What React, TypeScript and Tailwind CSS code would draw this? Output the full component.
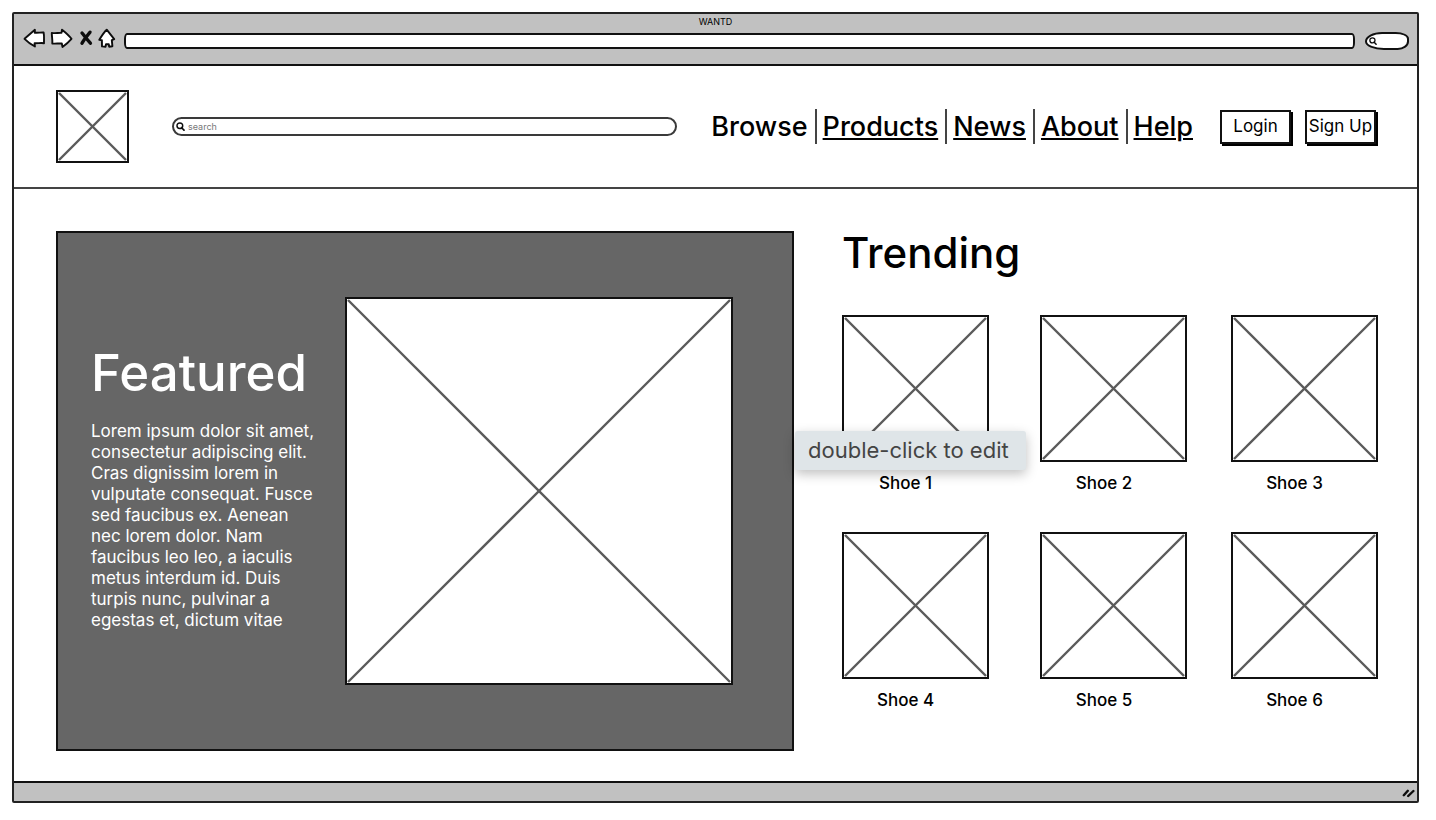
import React from "react";

const ink = "#0d0d0d";

function PlaceholderImage({ className, label }: { className: string; label: string }) {
  return (
    <svg
      role="img"
      aria-label={label}
      viewBox="0 0 100 100"
      preserveAspectRatio="none"
      className={`block shrink-0 overflow-visible border-2 border-[#111] bg-white p-px ${className}`}
    >
      <g stroke="#5a5a5a" strokeWidth="2.4">
        <line x1="0" y1="0" x2="100" y2="100" vectorEffect="non-scaling-stroke" />
        <line x1="100" y1="0" x2="0" y2="100" vectorEffect="non-scaling-stroke" />
      </g>
    </svg>
  );
}

function Magnifier({ className }: { className: string }) {
  return (
    <svg aria-hidden="true" viewBox="0 0 9 9" className={className} fill="none" stroke={ink} strokeLinecap="round">
      <path d="M1 3.8C0.9 2.1 2.1 1 3.9 1C5.6 1 6.8 2.1 6.7 3.9C6.6 5.6 5.5 6.6 3.8 6.6C2.1 6.5 1 5.4 1 3.8Z" strokeWidth="1.5" />
      <path d="M5.8 6L8 8.2" strokeWidth="1.7" />
    </svg>
  );
}

const iconProps = {
  "aria-hidden": true,
  stroke: ink,
  strokeWidth: 1.9,
  strokeLinejoin: "round",
  strokeLinecap: "round",
  fill: "#fff",
} as const;

function BrowserBar() {
  return (
    <header className="border-b-2 border-[#111] bg-[#c1c1c1] pb-[10px]">
      <p className="pt-px text-center text-[9px] leading-[13px]">WANTD</p>
      <div className="flex h-[26px] items-center pl-[9px] pr-2">
        <button aria-label="Back" className="shrink-0">
          <svg {...iconProps} viewBox="22 28 23 26" width="23" height="26">
            <path d="M23.5 38.8L33.9 29.8L33.8 32.7C37 33 40 32.3 42.6 32.5C43.4 36 42.9 39.6 43 43.2C40 42.7 37 43.4 33.6 43.3L33.9 46.5C30 44.4 26.7 42 23.5 38.8Z" />
          </svg>
        </button>
        <button aria-label="Forward" className="ml-1 shrink-0">
          <svg {...iconProps} viewBox="49 28 23 26" width="23" height="26">
            <path d="M50.8 32.9C54 33.4 57 32.8 60.5 32.9L61 29.7C64.5 32.5 67.7 35 70.5 38.9C67.8 42 65 44.5 61.5 47L60.8 43.5C57.5 43.2 54.5 43.9 51.3 43.5C51.6 39.8 50.8 36.5 50.8 32.9Z" />
          </svg>
        </button>
        <button aria-label="Stop" className="ml-1.5 shrink-0">
          <svg {...iconProps} fill="none" viewBox="79 28 14 26" width="14" height="26">
            <path d="M82 33C84.5 36 87 39.5 90.4 43.2M90 32.2C87.5 35.5 84 39.5 82 43.3" strokeWidth="3.4" />
          </svg>
        </button>
        <button aria-label="Home" className="ml-[5px] shrink-0">
          <svg {...iconProps} viewBox="98 28 18 26" width="18" height="26">
            <path d="M106.7 29.7L114.2 39.2L111.8 40.2L112.4 46.2L109.1 46.7L108.8 44.3L106 44.3L105.5 46.8L102 46.4L101.9 40.2L99.3 39.8C101.3 36.5 103.6 32.5 106.7 29.7Z" />
          </svg>
        </button>
        <input
          type="text"
          aria-label="Address"
          className="ml-2 h-4 min-w-0 flex-1 rounded-[3px/6px] border-2 border-[#111] bg-white px-2 text-[10px] outline-none"
        />
        <label className="ml-[10px] flex h-[18px] w-11 shrink-0 items-center rounded-[18px_14px_12px_20px/10px_7px_9px_9px] border-2 border-[#111] bg-white pl-0.5">
          <Magnifier className="size-2 shrink-0" />
          <input type="search" aria-label="Web search" className="w-full min-w-0 bg-transparent text-[9px] outline-none" />
        </label>
      </div>
    </header>
  );
}

const links = ["Browse", "Products", "News", "About", "Help"];

function SiteNav() {
  return (
    <div className="flex items-center border-b-2 border-[#444] py-6 pl-[42px] pr-[41px]">
      <PlaceholderImage label="Logo" className="size-[73px]" />
      <label className="ml-[43px] flex h-[19px] min-w-0 flex-1 items-center gap-[3px] rounded-full border-2 border-[#3a3a3a] pl-[2px]">
        <Magnifier className="size-[9px] shrink-0" />
        <input
          type="search"
          placeholder="search"
          aria-label="Search products"
          className="w-full min-w-0 bg-transparent text-[9px] leading-3 outline-none placeholder:text-[#777]"
        />
      </label>
      <nav className="ml-[34px] flex items-center text-[27px] font-medium leading-[35px]">
        {links.map((name, i) => (
          <a
            key={name}
            href={`#${name.toLowerCase()}`}
            className={
              i === 0
                ? "pr-[7px]"
                : "border-l-2 border-[#444] pl-1.5 pr-[7px] underline decoration-2 underline-offset-2 last:pr-0"
            }
          >
            {name}
          </a>
        ))}
      </nav>
      <div className="ml-[27px] flex gap-[14px]">
        {["Login", "Sign Up"].map((name) => (
          <button
            key={name}
            className="h-[34px] w-[71px] whitespace-nowrap border-2 border-[#111] bg-white text-[17px] shadow-[2px_2px_0_#000]"
          >
            {name}
          </button>
        ))}
      </div>
    </div>
  );
}

const lorem = [
  "Lorem ipsum dolor sit amet,",
  "consectetur adipiscing elit.",
  "Cras dignissim lorem in",
  "vulputate consequat. Fusce",
  "sed faucibus ex. Aenean",
  "nec lorem dolor. Nam",
  "faucibus leo leo, a iaculis",
  "metus interdum id. Duis",
  "turpis nunc, pulvinar a",
  "egestas et, dictum vitae",
];

function Featured() {
  return (
    <section className="flex items-center justify-between border-2 border-[#111] bg-[#666] py-16 pl-[33px] pr-[59px] text-white">
      <div>
        <h1 className="text-[51px] font-medium leading-[42px]">Featured</h1>
        <p className="mt-[27px] whitespace-nowrap text-[17px] leading-[21px]">
          {lorem.map((line) => (
            <span key={line} className="block">
              {line}
            </span>
          ))}
        </p>
      </div>
      <PlaceholderImage label="Featured product" className="size-[388px]" />
    </section>
  );
}

function Trending() {
  return (
    <section>
      <h2 className="text-[42px] font-medium leading-[44px]">Trending</h2>
      <ul className="mt-10 grid grid-cols-[199fr_191fr_146fr] gap-y-[38px]">
        {[1, 2, 3, 4, 5, 6].map((n) => (
          <li key={n} className="relative w-[147px]">
            <PlaceholderImage label={`Shoe ${n} photo`} className="size-[147px]" />
            <p className="mt-2.5 pr-5 text-center text-[17px] font-medium leading-[22px]">Shoe {n}</p>
            {n === 1 && (
              <div
                role="tooltip"
                className="absolute -left-[47px] top-[116px] z-10 whitespace-nowrap rounded-[3px] bg-[#dfe5e8] pl-[13px] pr-[17px] text-[22px] leading-[39px] text-[#444] shadow-[0_4px_12px_rgba(0,0,0,0.25)]"
              >
                double-click to edit
              </div>
            )}
          </li>
        ))}
      </ul>
    </section>
  );
}

export default function App() {
  return (
    <div className="min-h-screen bg-white pb-[18px] pl-3 pr-[17px] pt-3 font-['Inter','Liberation_Sans',sans-serif] text-black">
      <div className="rounded-[2px] border-2 border-[#222]">
        <BrowserBar />
        <SiteNav />
        <main className="grid grid-cols-[738fr_536fr] gap-12 pb-[30px] pl-[42px] pr-[39px] pt-[42px]">
          <Featured />
          <Trending />
        </main>
        <footer className="flex h-5 items-center justify-end border-t-2 border-[#111] bg-[#c1c1c1] pr-[2px]">
          <svg aria-hidden="true" width="14" height="12" viewBox="0 0 14 12" stroke={ink} strokeWidth="2.4" strokeLinecap="round">
            <path d="M2.8 9.2L6.8 4.8M7.2 10L12.4 5" />
          </svg>
        </footer>
      </div>
    </div>
  );
}
